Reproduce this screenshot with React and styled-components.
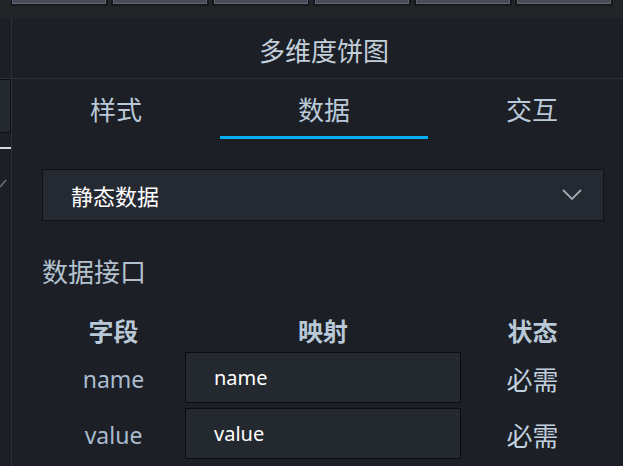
import React, { useState } from "react";
import styled, { createGlobalStyle } from "styled-components";

const GlobalStyle = createGlobalStyle`
  html, body {
    margin: 0;
    padding: 0;
    background: #1c1f26;
    overflow: hidden;
  }
  body {
    font-family: "Noto Sans", "Noto Sans CJK SC", sans-serif;
  }
`;

const Screen = styled.div`
  display: flex;
  flex-direction: column;
  width: 623px;
  height: 466px;
  overflow: hidden;
  background: #1c1f26;
`;

const TopBar = styled.div`
  display: flex;
  gap: 7px;
  height: 18px;
  padding-left: 12px;
  background: #212527;
  flex-shrink: 0;
`;

const ToolButton = styled.div`
  width: 92px;
  height: 3px;
  background: #474c58;
  border: 1px solid #5e6470;
  border-top: none;
  box-shadow: 0 0 0 2px #16181b;
`;

const Body = styled.div`
  display: flex;
  flex: 1;
  min-height: 0;
`;

const SideStrip = styled.div`
  display: flex;
  flex-direction: column;
  width: 11px;
  flex-shrink: 0;
  border-right: 1px solid #2c3039;
`;

const SideLine = styled.div`
  height: 1px;
  margin-top: 60px;
  background: #2c3039;
`;

const SideBox = styled.div`
  height: 52px;
  background: #242930;
  border: 1px solid #0d0f12;
  border-left: none;
`;

const SideRule = styled.div`
  height: 2px;
  margin-top: 14px;
  background: #d6d9de;
`;

const SideMark = styled.svg`
  display: block;
  margin-top: 28px;
`;

const Panel = styled.div`
  width: 624px;
  flex-shrink: 0;
  display: flex;
  flex-direction: column;
`;

const Title = styled.div`
  height: 60px;
  display: flex;
  align-items: center;
  justify-content: center;
  padding-top: 4px;
  box-sizing: border-box;
  font-size: 26px;
  color: #c3cfda;
`;

const Tabs = styled.div`
  display: grid;
  grid-template-columns: repeat(3, 1fr);
  border-top: 1px solid #2c3039;
`;

const Tab = styled.div`
  height: 60px;
  box-sizing: border-box;
  display: flex;
  align-items: center;
  justify-content: center;
  padding-top: 3px;
  font-size: 26px;
  color: #b9c9d8;
  cursor: pointer;
  border-bottom: 3px solid ${(p) => (p.$active ? "#00b2f5" : "transparent")};
`;

const Content = styled.div`
  padding: 30px 20px 0 30px;
  display: flex;
  flex-direction: column;
`;

const Select = styled.div`
  width: 562px;
  height: 52px;
  box-sizing: border-box;
  display: flex;
  align-items: center;
  justify-content: space-between;
  padding: 0 20px 0 28px;
  background: #252a32;
  border: 1px solid #0f1114;
  font-size: 22px;
  color: #ffffff;
`;

const SectionLabel = styled.div`
  margin-top: 36px;
  line-height: 30px;
  font-size: 26px;
  color: #b3c1ce;
`;

const Grid = styled.div`
  display: grid;
  width: 562px;
  grid-template-columns: 143px 276px 143px;
  row-gap: 5px;
  margin-top: 28px;
`;

const HeadCell = styled.div`
  height: 30px;
  display: flex;
  align-items: center;
  justify-content: center;
  margin-bottom: 2px;
  font-size: 25px;
  font-weight: 700;
  color: #b8c8d6;
`;

const FieldCell = styled.div`
  height: 51px;
  display: flex;
  align-items: center;
  justify-content: center;
  padding-top: 2px;
  box-sizing: border-box;
  font-size: ${(p) => (p.$cjk ? "26px" : "23px")};
  color: ${(p) => (p.$cjk ? "#c0d0df" : "#a9bccf")};
`;

const MapInput = styled.input`
  height: 51px;
  width: 100%;
  box-sizing: border-box;
  padding: 0 0 0 28px;
  background: #242930;
  border: 1px solid #0b0d10;
  outline: none;
  font-family: "Noto Sans", "Noto Sans CJK SC", sans-serif;
  font-size: 20px;
  color: #ffffff;
`;

const fields = [
  { name: "name", map: "name", state: "必需" },
  { name: "value", map: "value", state: "必需" },
];

const Chevron = () => (
  <svg width="22" height="14" viewBox="0 0 22 14">
    <polyline
      points="2,2 11,11 20,2"
      fill="none"
      stroke="#a3a9b1"
      strokeWidth="1.8"
    />
  </svg>
);

export default function App() {
  const [tab, setTab] = useState(1);
  const [maps, setMaps] = useState(fields.map((f) => f.map));
  const tabs = ["样式", "数据", "交互"];

  return (
    <Screen>
      <GlobalStyle />
      <TopBar>
        {[0, 1, 2, 3, 4, 5].map((i) => (
          <ToolButton key={i} />
        ))}
      </TopBar>
      <Body>
        <SideStrip>
          <SideLine />
          <SideBox />
          <SideRule />
          <SideMark width="11" height="12" viewBox="0 0 11 12">
            <line x1="0" y1="10" x2="6" y2="3" stroke="#6b7078" strokeWidth="1.5" />
          </SideMark>
        </SideStrip>
        <Panel>
          <Title>多维度饼图</Title>
          <Tabs>
            {tabs.map((t, i) => (
              <Tab key={t} $active={tab === i} onClick={() => setTab(i)}>
                {t}
              </Tab>
            ))}
          </Tabs>
          <Content>
            <Select>
              <span>静态数据</span>
              <Chevron />
            </Select>
            <SectionLabel>数据接口</SectionLabel>
            <Grid>
              <HeadCell>字段</HeadCell>
              <HeadCell>映射</HeadCell>
              <HeadCell>状态</HeadCell>
              {fields.map((f, i) => (
                <React.Fragment key={f.name}>
                  <FieldCell>{f.name}</FieldCell>
                  <MapInput
                    value={maps[i]}
                    onChange={(e) => {
                      const next = [...maps];
                      next[i] = e.target.value;
                      setMaps(next);
                    }}
                  />
                  <FieldCell $cjk>{f.state}</FieldCell>
                </React.Fragment>
              ))}
            </Grid>
          </Content>
        </Panel>
      </Body>
    </Screen>
  );
}
